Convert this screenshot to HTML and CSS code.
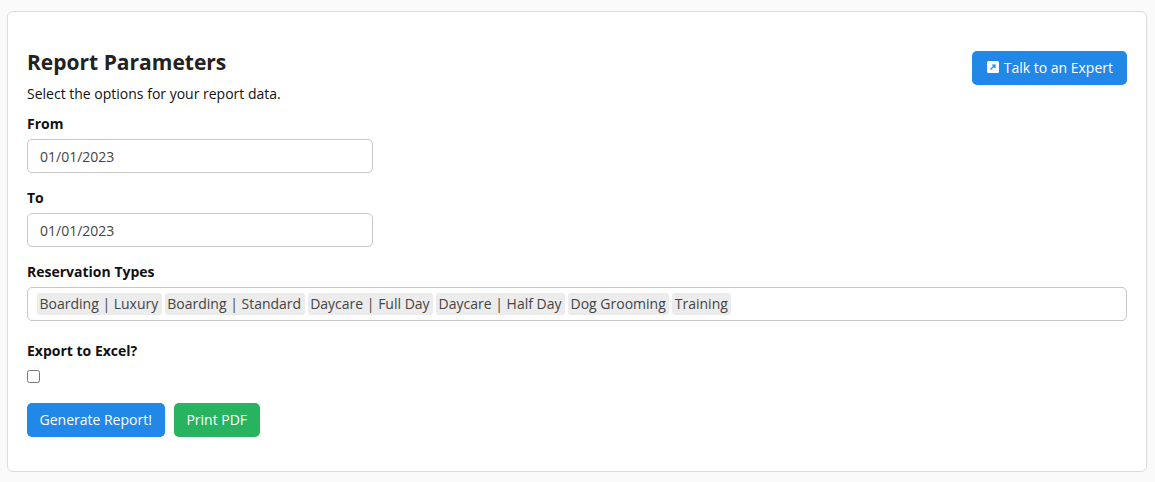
FILE: index.html
```html
<!DOCTYPE html>
<html lang="en">
<head>
    <meta charset="UTF-8">
    <meta name="viewport" content="width=device-width, initial-scale=1.0">
    <title>Report Parameters</title>
    <link rel="stylesheet" href="styles.css">
</head>
<body>
    <div class="card">
        <div class="header">
            <div>
                <h2>Report Parameters</h2>
                <p class="subtitle">Select the options for your report data.</p>
            </div>
            <button class="btn btn-primary btn-expert">
                <svg class="icon" viewBox="0 0 12 12" width="12" height="12">
                    <rect width="12" height="12" rx="1.5" fill="#fff"/>
                    <path d="M3.5 8.5 L7.5 4.5 M5 4 H8 V7" fill="none" stroke="#2188e8" stroke-width="1.2"/>
                </svg>
                Talk to an Expert
            </button>
        </div>

        <div class="field">
            <label>From</label>
            <input type="text" class="input input-date" value="01/01/2023">
        </div>
        <div class="field">
            <label>To</label>
            <input type="text" class="input input-date" value="01/01/2023">
        </div>
        <div class="field">
            <label>Reservation Types</label>
            <div class="input tags">
                <span class="tag">Boarding | Luxury</span>
                <span class="tag">Boarding | Standard</span>
                <span class="tag">Daycare | Full Day</span>
                <span class="tag">Daycare | Half Day</span>
                <span class="tag">Dog Grooming</span>
                <span class="tag">Training</span>
            </div>
        </div>
        <div class="field field-check">
            <label>Export to Excel?</label>
            <input type="checkbox" class="check">
        </div>
        <div class="actions">
            <button class="btn btn-primary">Generate Report!</button>
            <button class="btn btn-success">Print PDF</button>
        </div>
    </div>
</body>
</html>
```

FILE: styles.css
```css
* { box-sizing: border-box; margin: 0; padding: 0; }
body {
    font-family: "Open Sans", "Noto Sans", sans-serif;
    font-size: 14px;
    color: #111;
    background-color: #fafafa;
    padding: 11px 8px 10px 7px;
}
.card {
    height: 461px;
    background: white;
    border: 1px solid #dbdbdb;
    border-radius: 6px;
    padding: 38px 19px 0 19px;
}
.header {
    display: flex;
    justify-content: space-between;
    align-items: flex-start;
    margin-top: 1px;
    margin-bottom: 10px;
}
h2 {
    font-size: 21px;
    line-height: 22px;
    font-weight: 700;
    color: #222;
}
.subtitle {
    margin-top: 11px;
    line-height: 20px;
}
.btn {
    height: 34px;
    padding: 0 13px 1px 12.5px;
    border: none;
    border-radius: 5px;
    color: white;
    font-family: inherit;
    font-size: 14px;
    cursor: pointer;
}
.btn-primary { background: #2188e8; }
.btn-success { background: #27b35f; padding: 0 13px 1px 12.5px; }
.btn-expert {
    display: flex;
    align-items: center;
    gap: 5px;
    padding: 0 14px 2px 15px;
}
.field { margin-bottom: 15px; }
label {
    display: block;
    font-weight: 700;
    line-height: 20px;
    margin-bottom: 5px;
}
.input {
    display: block;
    height: 34px;
    border: 1px solid #c8c8c8;
    border-radius: 5px;
    background: white;
    font-family: inherit;
    font-size: 14px;
    color: #444;
}
.input-date {
    width: 346px;
    padding: 0 12px;
}
.tags {
    display: flex;
    align-items: center;
    gap: 3px;
    padding: 0 9px;
}
.tag {
    background: #ececec;
    border-radius: 3px;
    padding: 0 3.5px 0 2.5px;
    line-height: 22px;
    color: #444;
}
.field-check { margin-top: 20px; margin-bottom: 20px; }
.field-check label { margin-bottom: 9px; }
.check {
    display: block;
    width: 13px;
    height: 13px;
}
.actions {
    display: flex;
    gap: 9px;
}
```
